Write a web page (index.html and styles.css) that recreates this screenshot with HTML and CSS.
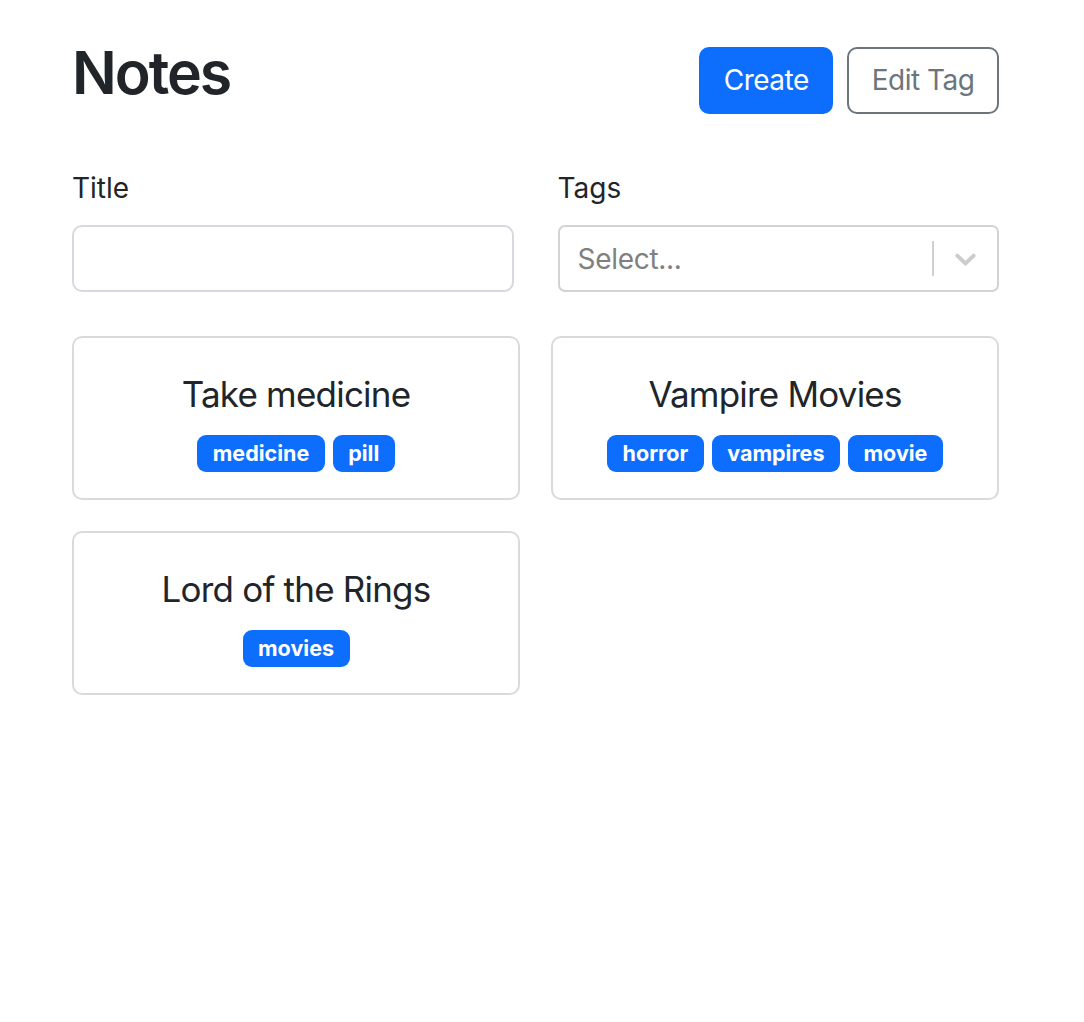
FILE: index.html
```html
<!DOCTYPE html>
<html lang="en">
<head>
<meta charset="utf-8">
<title>Notes</title>
<link rel="stylesheet" href="styles.css">
</head>
<body>
<div class="container">
  <div class="header">
    <h1 class="title">Notes</h1>
    <div class="actions">
      <button class="btn btn-primary">Create</button>
      <button class="btn btn-outline">Edit Tag</button>
    </div>
  </div>

  <form class="filters">
    <div class="field">
      <label class="label" for="title">Title</label>
      <input class="input" id="title" type="text">
    </div>
    <div class="field">
      <label class="label">Tags</label>
      <div class="select">
        <div class="select-value">Select...</div>
        <div class="select-indicators">
          <span class="select-sep"></span>
          <span class="select-arrow">
            <svg viewBox="0 0 20 20" width="35" height="35" aria-hidden="true"><path d="M4.516 7.548c0.436-0.446 1.043-0.481 1.576 0l3.908 3.747 3.908-3.747c0.533-0.481 1.141-0.446 1.574 0 0.436 0.445 0.408 1.197 0 1.615-0.406 0.418-4.695 4.502-4.695 4.502-0.217 0.223-0.502 0.335-0.787 0.335s-0.57-0.112-0.789-0.335c0 0-4.287-4.084-4.695-4.502s-0.436-1.17 0-1.615z"/></svg>
          </span>
        </div>
      </div>
    </div>
  </form>

  <div class="cards">
    <div class="card">
      <span class="card-title">Take medicine</span>
      <div class="badges">
        <span class="badge">medicine</span>
        <span class="badge">pill</span>
      </div>
    </div>
    <div class="card">
      <span class="card-title">Vampire Movies</span>
      <div class="badges">
        <span class="badge">horror</span>
        <span class="badge">vampires</span>
        <span class="badge">movie</span>
      </div>
    </div>
    <div class="card">
      <span class="card-title">Lord of the Rings</span>
      <div class="badges">
        <span class="badge">movies</span>
      </div>
    </div>
  </div>
</div>
</body>
</html>
```

FILE: styles.css
```css
* { box-sizing: border-box; }

body {
  margin: 0;
  background: #fff;
  color: #212529;
  font-family: Inter, "Liberation Sans", Arial, sans-serif;
  font-size: 28px;
  line-height: 1.5;
}

.container {
  width: 927px;
  margin-left: 72px;
  padding-top: 38px;
}

.header {
  display: flex;
  align-items: center;
  justify-content: space-between;
}

.title {
  margin: 0 0 14px;
  font-size: 59px;
  font-weight: 600;
  line-height: 1.2;
  letter-spacing: -2px;
}

.actions {
  display: flex;
  gap: 14px;
}

.btn {
  font-family: inherit;
  font-size: 28px;
  line-height: 42px;
  padding: 10.5px 22.5px;
  border: 2px solid transparent;
  border-radius: 10px;
  letter-spacing: -0.5px;
  cursor: pointer;
}

.btn-primary {
  background: #0d6efd;
  border-color: #0d6efd;
  color: #fff;
}

.btn-outline {
  background: #fff;
  border-color: #6c757d;
  color: #6c757d;
}

.filters {
  margin-top: 44px;
  display: grid;
  grid-template-columns: 1fr 1fr;
  column-gap: 44px;
}

.field {
  display: flex;
  flex-direction: column;
}

.label {
  line-height: 42px;
  margin-bottom: 16px;
}

.input {
  height: 67px;
  width: 100%;
  border: 2px solid #d6dadf;
  border-radius: 10px;
  font-family: inherit;
  font-size: 28px;
  padding: 0 21px;
  outline: none;
}

.select {
  height: 67px;
  display: flex;
  align-items: center;
  border: 2px solid #d3d3d3;
  border-radius: 7px;
  background: #fff;
}

.select-value {
  flex: 1;
  padding-left: 18px;
  padding-top: 2px;
  color: #808080;
  letter-spacing: -0.3px;
}

.select-indicators {
  display: flex;
  align-items: center;
  align-self: stretch;
}

.select-sep {
  align-self: stretch;
  width: 2px;
  margin: 14px 0;
  background: #d0d0d0;
}

.select-arrow {
  display: flex;
  padding: 0 14px;
}

.select-arrow svg {
  fill: #cccccc;
}

.cards {
  margin-top: 44px;
  display: grid;
  grid-template-columns: 1fr 1fr;
  gap: 31px;
}

.card {
  height: 164px;
  padding-top: 3px;
  border: 2px solid #dadada;
  border-radius: 10px;
  display: flex;
  flex-direction: column;
  align-items: center;
  justify-content: center;
  gap: 14px;
}

.card-title {
  font-size: 35px;
  line-height: 54px;
  letter-spacing: -0.8px;
}

.badges {
  display: flex;
  gap: 8px;
}

.badge {
  background: #0d6efd;
  color: #fff;
  font-size: 21.5px;
  font-weight: 700;
  line-height: 1;
  padding: 8px 15.5px;
  border-radius: 9px;
}
```
